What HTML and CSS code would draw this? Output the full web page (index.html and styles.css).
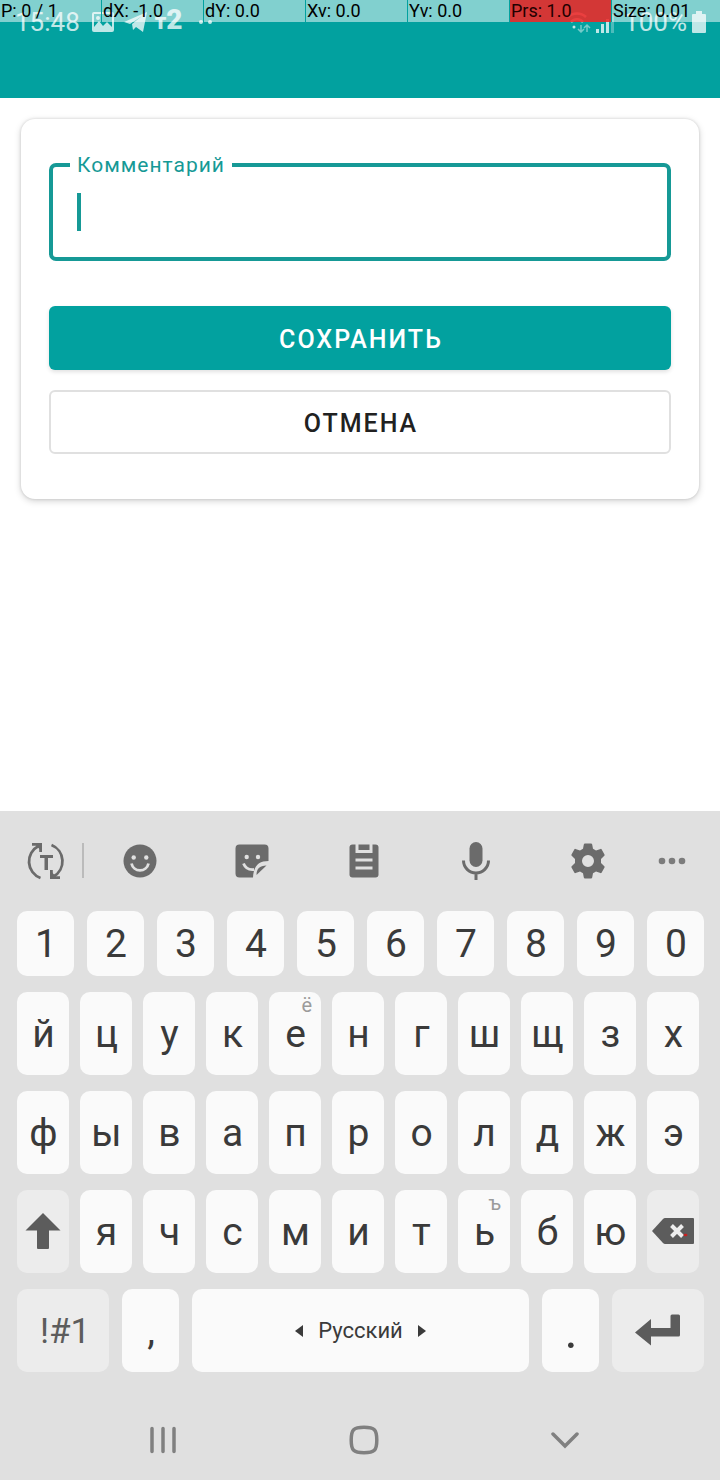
FILE: index.html
```html
<!DOCTYPE html>
<html lang="ru">
<head>
<meta charset="utf-8">
<meta name="viewport" content="width=device-width, initial-scale=1">
<title>Комментарий</title>
<link rel="stylesheet" href="styles.css">
</head>
<body>
<header class="appbar">
  <div class="status">
    <span class="status-text">15:48</span>
    <svg class="status-photo" width="22" height="20" viewBox="0 0 22 20"><path fill-rule="evenodd" d="M2 0h18a2 2 0 0 1 2 2v16a2 2 0 0 1-2 2H2a2 2 0 0 1-2-2V2a2 2 0 0 1 2-2zM2 2v13l5-6 4 5 4-4 5 5V2zM6 4a2 2 0 1 1 0 4 2 2 0 0 1 0-4z"/></svg>
    <svg class="status-plane" width="24" height="20" viewBox="0 0 24 20"><path d="M0 10 23 0l-4 20-7-5-3 3-1-6L18 4 6 12z"/></svg>
    <span class="carrier">т<b>2</b></span>
    <svg class="status-dots" width="14" height="4" viewBox="0 0 14 4"><circle cx="2" cy="2" r="2"/><circle cx="11" cy="2" r="2"/></svg>
    <svg class="status-signal" width="46" height="22" viewBox="0 0 46 22">
      <g fill="none" stroke="#fff" stroke-width="2.5"><path d="M0 6a13 13 0 0 1 18 0M3 11a8 8 0 0 1 12 0"/></g>
      <circle cx="6" cy="16" r="1.500"/>
      <g fill="none" stroke="#fff" stroke-width="1.500" opacity=".6"><path d="M13 14v7M10 18l3 3 3-3M19 21v-7M16 17l3-3 3 3"/></g>
      <path d="M28 18h3v4h-3zM33 13h3v9h-3zM38 8h3v14h-3z"/><path opacity=".4" d="M43 3h3v19h-3z"/>
    </svg>
    <span class="status-text">100%</span>
    <svg class="status-battery" width="14" height="22" viewBox="0 0 14 22"><path d="M4 0h6v3h3q1 0 1 1v17q0 1-1 1H1q-1 0-1-1V4q0-1 1-1h3z"/></svg>
  </div>
  <div class="pointer-info">
    <span>P: 0 / 1</span><span>dX: -1.0</span><span>dY: 0.0</span><span>Xv: 0.0</span><span>Yv: 0.0</span><span class="pressure">Prs: 1.0</span><span>Size: 0.01</span>
  </div>
</header>

<main class="content">
  <form class="card">
    <fieldset class="field">
      <legend><label for="comment">Комментарий</label></legend>
      <div class="field-row"><span class="caret"></span><input id="comment" type="text"></div>
    </fieldset>
    <button class="btn btn-primary" type="button">СОХРАНИТЬ</button>
    <button class="btn btn-outline" type="button">ОТМЕНА</button>
  </form>
</main>

<section class="keyboard" aria-label="Клавиатура">
  <div class="toolbar">
    <button class="tool tool-first" type="button" aria-label="Перевод">
      <svg width="38" height="38" viewBox="0 0 38 38"><g fill="none" stroke="#6b6b6b" stroke-width="2.800"><path d="M13.500 36A17.500 17.500 0 0 1 11.500 4M24.500 3A17.500 17.500 0 0 1 26.500 34.500"/><path d="M5 2.400h8.600V10M33 35.600h-8.600V28"/></g><path d="M7 1h8v9zM31 37h-8v-9z"/><path d="M13 13h13v3h-5v12h-3.500V16H13z"/></svg>
    </button>
    <button class="tool" type="button" aria-label="Эмодзи">
      <svg width="34" height="34" viewBox="0 0 34 34"><circle cx="17" cy="17" r="16.500"/><g fill="#e0e0e0"><circle cx="10.700" cy="13.500" r="2.200"/><circle cx="23.300" cy="13.500" r="2.200"/></g><path d="M8.500 19.500a8.700 8.700 0 0 0 17 0" fill="none" stroke="#e0e0e0" stroke-width="2.800"/></svg>
    </button>
    <button class="tool" type="button" aria-label="Стикеры">
      <svg width="34" height="34" viewBox="0 0 34 34"><path d="M4.500.500h25a4 4 0 0 1 4 4V17c-10 0-15 5-15.500 16.500H4.500a4 4 0 0 1-4-4v-25a4 4 0 0 1 4-4z"/><g fill="#e0e0e0"><circle cx="11.700" cy="13" r="2.200"/><circle cx="23" cy="13" r="2.200"/></g><path d="M8.500 19.500c2 5 6 6.500 10.500 6" fill="none" stroke="#e0e0e0" stroke-width="2.800"/><path d="M21.500 31c0-6 3-9.500 10-9.500z"/></svg>
    </button>
    <button class="tool" type="button" aria-label="Буфер обмена">
      <svg width="30" height="34" viewBox="0 0 30 34"><rect x=".500" y=".500" width="29" height="33" rx="3"/><path fill="#e0e0e0" d="M6.500 0h3v6h11V0h3v9h-17zM6.500 14.500h17v3h-17zM6.500 22.500h17v3h-17z"/></svg>
    </button>
    <button class="tool" type="button" aria-label="Голосовой ввод">
      <svg width="30" height="40" viewBox="0 0 30 40"><rect x="8.500" y="1" width="13" height="25" rx="6.500"/><path d="M2.500 19.500a12.500 12.500 0 0 0 25 0M15 32v7" fill="none" stroke="#6b6b6b" stroke-width="3"/></svg>
    </button>
    <button class="tool" type="button" aria-label="Настройки">
      <svg width="34" height="36" viewBox="0 0 34 36"><path fill-rule="evenodd" d="M14 .500h6q1 0 1.200 1l.8 4.200 3 1.700 4.500-1.500q.8-.3 1.200.5l2.800 5q.4.800-.2 1.300L30 15.900v4.200l3.300 3.200q.6.500.2 1.300l-2.800 5q-.4.800-1.200.5L25 28.600l-3 1.700-.8 4.200q-.2 1-1.200 1h-6q-1 0-1.200-1l-.8-4.200-3-1.700-4.500 1.500q-.8.300-1.200-.5l-2.800-5q-.4-.8.2-1.300L4 20.100v-4.200L.7 12.700q-.6-.5-.2-1.300l2.800-5q.4-.8 1.200-.5L9 7.400l3-1.700.8-4.200Q13 .500 14 .500zM17 12a6 6 0 1 0 0 12 6 6 0 0 0 0-12z"/></svg>
    </button>
    <button class="tool" type="button" aria-label="Ещё">
      <svg width="28" height="8" viewBox="0 0 28 8" opacity=".85"><circle cx="4" cy="4" r="3.300"/><circle cx="14" cy="4" r="3.300"/><circle cx="24" cy="4" r="3.300"/></svg>
    </button>
  </div>

  <div class="keys">
    <div class="row row-digits">
      <button class="key" type="button">1</button><button class="key" type="button">2</button><button class="key" type="button">3</button><button class="key" type="button">4</button><button class="key" type="button">5</button><button class="key" type="button">6</button><button class="key" type="button">7</button><button class="key" type="button">8</button><button class="key" type="button">9</button><button class="key" type="button">0</button>
    </div>
    <div class="row row-letters">
      <button class="key" type="button">й</button><button class="key" type="button">ц</button><button class="key" type="button">у</button><button class="key" type="button">к</button><button class="key" type="button">е<span class="hint">ё</span></button><button class="key" type="button">н</button><button class="key" type="button">г</button><button class="key" type="button">ш</button><button class="key" type="button">щ</button><button class="key" type="button">з</button><button class="key" type="button">х</button>
    </div>
    <div class="row row-letters">
      <button class="key" type="button">ф</button><button class="key" type="button">ы</button><button class="key" type="button">в</button><button class="key" type="button">а</button><button class="key" type="button">п</button><button class="key" type="button">р</button><button class="key" type="button">о</button><button class="key" type="button">л</button><button class="key" type="button">д</button><button class="key" type="button">ж</button><button class="key" type="button">э</button>
    </div>
    <div class="row row-letters">
      <button class="key key-fn" type="button" aria-label="Shift"><svg width="36" height="38" viewBox="0 0 36 38"><path d="M18 0 35.500 17.500H24V35q0 1-1 1H13q-1 0-1-1V17.500H.500z"/></svg></button><button class="key" type="button">я</button><button class="key" type="button">ч</button><button class="key" type="button">с</button><button class="key" type="button">м</button><button class="key" type="button">и</button><button class="key" type="button">т</button><button class="key" type="button">ь<span class="hint">ъ</span></button><button class="key" type="button">б</button><button class="key" type="button">ю</button><button class="key key-fn" type="button" aria-label="Удалить"><svg width="42" height="28" viewBox="0 0 42 28"><path d="M0 13 11 1q1-1 2-1h28q1 0 1 1v24q0 1-1 1H13q-1 0-2-1z"/><path d="m19.500 7.500 11 11m0-11-11 11" fill="none" stroke="#ededed" stroke-width="4"/><ellipse cx="33.500" cy="17" rx="2" ry="1.300" fill="#c62020"/></svg></button>
    </div>
    <div class="row row-bottom">
      <button class="key key-fn key-symbols" type="button">!#1</button>
      <button class="key" type="button">,</button>
      <button class="key key-space" type="button"><svg width="8" height="12" viewBox="0 0 8 12"><path d="M0 6 8 0v12z"/></svg><span>Русский</span><svg width="8" height="12" viewBox="0 0 8 12"><path d="M8 6 0 0v12z"/></svg></button>
      <button class="key key-dot" type="button">.</button>
      <button class="key key-fn" type="button" aria-label="Ввод"><svg width="46" height="34" viewBox="0 0 46 34"><path d="M0 18.500 16 5v9h19.500V2q0-1.500 1.500-1.500h6.500Q45 .500 45 2v19q0 1.500-1.500 1.500H16v9z"/></svg></button>
    </div>
  </div>

  <nav class="navbar">
    <button class="nav" type="button" aria-label="Недавние"><svg width="26" height="28" viewBox="0 0 26 28"><path d="M2 2.500v23M13 2.500v23M24 2.500v23"/></svg></button>
    <button class="nav" type="button" aria-label="Домой"><svg width="30" height="30" viewBox="0 0 30 30"><path d="M15 2.200c10.500 0 12.800 2.300 12.800 12.800S25.500 27.800 15 27.800 2.200 25.500 2.200 15 4.500 2.200 15 2.200z"/></svg></button>
    <button class="nav" type="button" aria-label="Скрыть клавиатуру"><svg width="28" height="18" viewBox="0 0 28 18"><path d="m2 3 12 12L26 3"/></svg></button>
  </nav>
</section>
</body>
</html>
```
FILE: styles.css
```css
* { box-sizing: border-box; }

body {
  margin: 0;
  min-height: 100vh;
  display: flex;
  flex-direction: column;
  background: #fff;
  font-family: Roboto, "Noto Sans", sans-serif;
}

button, input { font: inherit; margin: 0; padding: 0; border: 0; background: none; }
svg { display: block; flex: none; }

/* App bar and status */
.appbar { position: relative; height: 98px; background: #02a19f; }
.status { display: flex; align-items: center; height: 44px; padding: 0 14px 0 15px; color: #fff; fill: #fff; opacity: .75; }
.status-text { font-size: 26px; line-height: 44px; }
.status-photo { margin-left: 12px; }
.status-plane { margin-left: 10px; }
.carrier { margin-left: 7px; font-size: 22px; font-weight: 900; line-height: 40px; align-self: flex-start; }
.carrier b { font-size: 28px; font-weight: 900; }
.status-dots { margin-left: 16px; }
.status-signal { margin-left: auto; margin-right: 10px; }
.status-battery { margin-left: 5px; }

.pointer-info {
  position: absolute;
  top: 0;
  left: 0;
  right: 0;
  display: grid;
  grid-template-columns: repeat(6, 17fr) 18fr;
  font-size: 18px;
  line-height: 22px;
  color: #000;
}
.pointer-info span { padding-left: 1px; border-right: 1px solid #02a19f; background: rgba(255, 255, 255, .5); background-clip: padding-box; white-space: nowrap; }
.pointer-info .pressure { background: rgba(240, 40, 40, .88); color: #200; }
.pointer-info span:last-child { border-right: 0; }

/* Comment card */
.content { flex: 1; }
.card {
  margin: 21px;
  padding: 34px 28px 45px;
  display: flex;
  flex-direction: column;
  border-radius: 14px;
  background: #fff;
  box-shadow: 0 2px 7px rgba(0, 0, 0, .18), 0 0 3px rgba(0, 0, 0, .14);
}
.field { min-width: 0; margin: 0 0 45px; padding: 16px 24px 26px; border: 4px solid #169996; border-radius: 7px; }
.field legend { margin-left: -7px; padding: 0 7px; font-size: 21px; line-height: 24px; letter-spacing: 1px; color: #169996; }
.field-row { display: flex; height: 38px; }
.caret { width: 4px; background: #169996; }
.field input { flex: 1; min-width: 0; font-size: 28px; color: #212121; outline: 0; }

.btn { height: 64px; padding: 2px 0 0 2px; border-radius: 6px; font-size: 25px; font-weight: 500; letter-spacing: 2px; }
.btn-primary { background: #02a19f; color: #fff; box-shadow: 0 2px 4px rgba(0, 0, 0, .12); }
.btn-outline { margin-top: 20px; border: 2px solid #e0e0e0; color: #212121; }

/* Keyboard */
.keyboard { background: #e0e0e0; }
.toolbar { display: grid; grid-template-columns: 76fr repeat(5, 112fr) 56fr; height: 99px; padding: 0 20px 0 8px; margin-bottom: 1px; }
.tool { display: flex; align-items: center; justify-content: center; fill: #6b6b6b; }
.tool-first { background: linear-gradient(#bbb, #bbb) right center / 2px 35px no-repeat; }

.keys { display: flex; flex-direction: column; gap: 16px; padding: 0 16px 26px 17px; }
.row { display: grid; }
.row-digits { grid-template-columns: repeat(10, 1fr); gap: 13px; height: 65px; }
.row-letters { grid-template-columns: repeat(11, 1fr); gap: 11px; height: 83px; padding-right: 5px; }
.row-bottom { grid-template-columns: 92fr 57fr 337fr 57fr 92fr; gap: 13px; height: 83px; }
.key {
  position: relative;
  min-width: 0;
  display: flex;
  align-items: center;
  justify-content: center;
  padding: 1px 0 0 1px;
  border-radius: 10px;
  background: #fafafa;
  color: #3a3a3a;
  fill: #3a3a3a;
  font-size: 39px;
}
.key-fn { padding: 0; background: #ececec; color: #5c5c5c; fill: #5c5c5c; font-size: 35px; }
.key-symbols { padding: 2px 0 0 4px; }
.key-space { gap: 15px; padding: 0; font-size: 22px; }
.key-dot { font-size: 50px; }
.hint { position: absolute; top: 1px; right: 9px; font-size: 20px; line-height: 24px; color: #9b9b9b; }

.navbar { display: grid; grid-template-columns: repeat(3, 1fr); height: 83px; padding: 0 54px 0 62px; margin-bottom: -1px; }
.nav { display: flex; align-items: center; justify-content: center; fill: none; stroke: #808080; stroke-width: 3.5; stroke-linecap: round; }
```
